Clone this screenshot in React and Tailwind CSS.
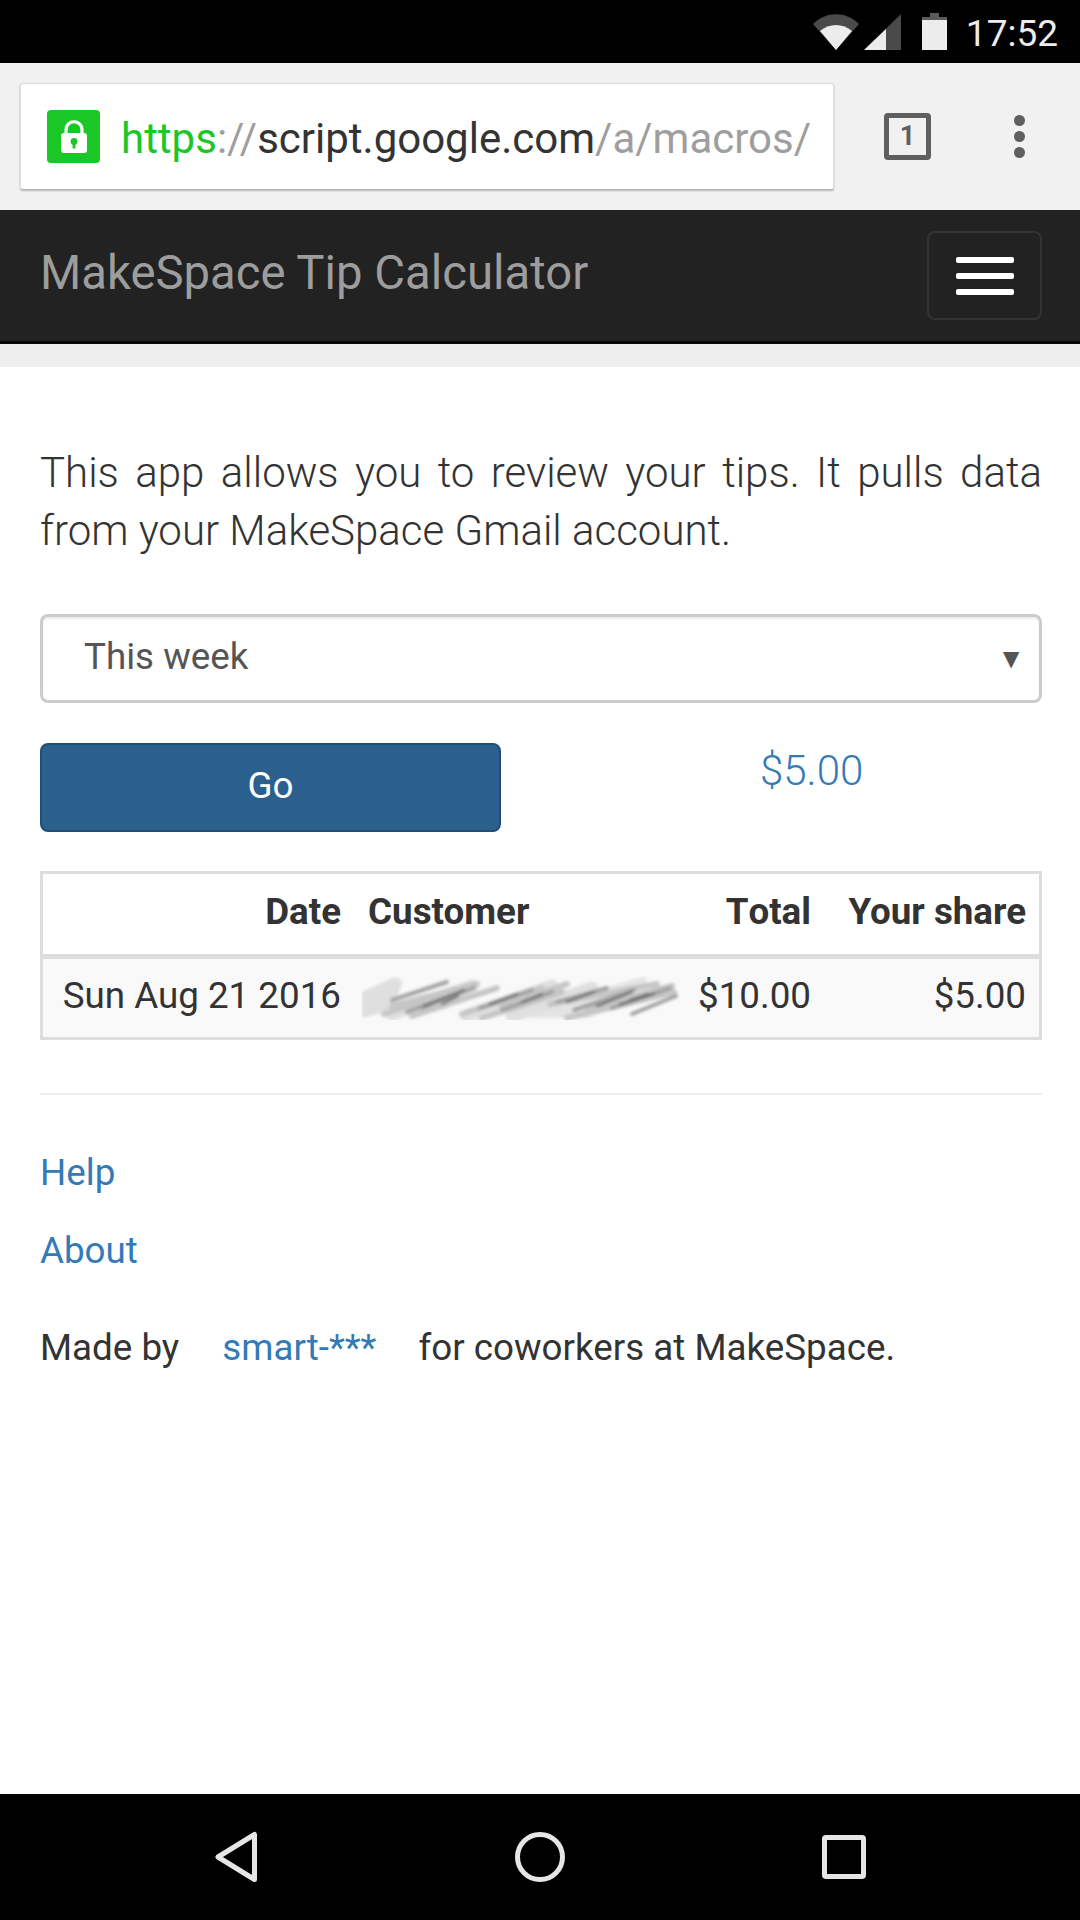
export default function App() {
  return (
    <div className="w-[1080px] h-[1920px] flex flex-col bg-white overflow-hidden font-['Roboto',sans-serif] text-[#333]">
      {/* Status bar */}
      <div className="h-[63px] shrink-0 bg-black flex items-center justify-end pr-[22px]">
        <svg width="46" height="36" viewBox="0 0 46 36" className="mr-[5px]">
          <path d="M23 36 L0 10 C13 -3 33 -3 46 10 Z" fill="#4a4a4a" />
          <path d="M23 36 L7 17 C16 9 30 9 39 17 Z" fill="#ececec" />
        </svg>
        <svg width="37" height="36" viewBox="0 0 37 36" className="mr-[21px]">
          <path d="M37 0 V36 H0 Z" fill="#4a4a4a" />
          <path d="M22 15 V36 H0 Z" fill="#ececec" />
        </svg>
        <svg width="25" height="37" viewBox="0 0 25 37" className="mr-[19px]">
          <path d="M8 0 H17 V4 H25 V37 H0 V4 H8 Z" fill="#ececec" />
          <path d="M8 0 H17 V4 H25 V7 H0 V4 H8 Z" fill="#5a5a5a" />
        </svg>
        <span className="text-[37px] leading-none text-[#ececec] mt-[3px]">17:52</span>
      </div>
      {/* Browser bar */}
      <div className="h-[147px] shrink-0 bg-[#f1f1f1] flex items-center pl-[20px]">
        <div className="w-[814px] h-[107px] bg-white rounded-[3px] border border-[#dcdcdc] border-b-[#b5b5b5] shadow-[0_1px_2px_rgba(0,0,0,0.25)] flex items-center pl-[26px] overflow-hidden">
          <div className="w-[53px] h-[53px] shrink-0 rounded-[4px] bg-[#1bc726] flex items-center justify-center">
            <svg width="28" height="34" viewBox="0 0 28 34">
              <path d="M6 14 V10 C6 -1 22 -1 22 10 V14" fill="none" stroke="#fff" strokeWidth="3.2" />
              <rect x="1" y="13" width="26" height="20" rx="3" fill="#fff" />
              <circle cx="14" cy="21.5" r="3.4" fill="#1bc726" />
              <rect x="12.6" y="22" width="2.8" height="6.5" fill="#1bc726" />
            </svg>
          </div>
          <div className="ml-[21px] w-[690px] whitespace-nowrap text-[42px] leading-[50px] mt-[4px]">
            <span className="text-[#1bc726]">https</span>
            <span className="text-[#9e9e9e]">://</span>
            <span className="text-[#333]">script.google.com</span>
            <span className="text-[#9e9e9e]">/a/macros/</span>
          </div>
        </div>
        <div className="ml-[50px] w-[47px] h-[47px] rounded-[4px] border-[5px] border-[#5f5f5f] flex items-center justify-center text-[27px] font-bold text-[#5f5f5f] leading-none">1</div>
        <div className="ml-[83px] flex flex-col gap-[5px]">
          <span className="w-[11px] h-[11px] rounded-full bg-[#5f5f5f]" />
          <span className="w-[11px] h-[11px] rounded-full bg-[#5f5f5f]" />
          <span className="w-[11px] h-[11px] rounded-full bg-[#5f5f5f]" />
        </div>
      </div>
      {/* Navbar */}
      <div className="h-[134px] shrink-0 bg-[#222] border-b-[3px] border-b-[#080808] flex items-center justify-between pl-[40px] pr-[38px]">
        <span className="text-[47.25px] leading-none text-[#9d9d9d] mt-[-3px]">MakeSpace Tip Calculator</span>
        <div className="w-[115px] h-[89px] rounded-[8px] border-2 border-[#333] flex flex-col items-center justify-center gap-[10px]">
          <span className="w-[58px] h-[6px] rounded-[2px] bg-white" />
          <span className="w-[58px] h-[6px] rounded-[2px] bg-white" />
          <span className="w-[58px] h-[6px] rounded-[2px] bg-white" />
        </div>
      </div>
      <div className="h-[23px] shrink-0 bg-[#eeeeee]" />
      {/* Content */}
      <div className="flex-1 pl-[40px] pr-[38px] pt-[77px]">
        <p className="text-[42px] leading-[58px] font-light text-justify text-[#333]">
          This app allows you to review your tips. It pulls data from your MakeSpace Gmail account.
        </p>
        <div className="mt-[54px] h-[89px] rounded-[8px] border-[3px] border-[#ccc] shadow-[inset_0_2px_2px_rgba(0,0,0,0.075)] flex items-center justify-between pl-[41px] pr-[14px] text-[36.75px] text-[#555]">
          <span className="mt-[-4px]">This week</span>
          <span className="text-[28px] leading-none text-[#555]">▼</span>
        </div>
        <div className="mt-[40px] flex">
          <div className="w-[461px] h-[89px] rounded-[8px] bg-[#2b5f8e] border-2 border-[#204d74] text-white text-[36.75px] flex items-center justify-center pb-[4px]">Go</div>
          <span className="ml-[259px] mt-[3px] text-[42px] leading-[50px] font-light text-[#337ab7]">$5.00</span>
        </div>
        <table className="mt-[39px] w-[1002px] table-fixed border-separate border-spacing-0 border-[3px] border-[#ddd] text-[36.75px]">
          <colgroup>
            <col className="w-[311px]" />
            <col className="w-[331px]" />
            <col className="w-[140px]" />
            <col className="w-[214px]" />
          </colgroup>
          <thead>
            <tr className="h-[85px]">
              <th className="pr-[13px] pb-[4px] text-right font-bold border-b-[5px] border-b-[#ddd]">Date</th>
              <th className="pl-[14px] pb-[4px] text-left font-bold border-b-[5px] border-b-[#ddd]">Customer</th>
              <th className="pr-[14px] pb-[4px] text-right font-bold border-b-[5px] border-b-[#ddd] [font-kerning:none]">Total</th>
              <th className="pr-[13px] pb-[4px] text-right font-bold whitespace-nowrap border-b-[5px] border-b-[#ddd]">Your share</th>
            </tr>
          </thead>
          <tbody>
            <tr className="h-[78px] bg-[#f9f9f9]">
              <td className="pr-[13px] pb-[5px] text-right whitespace-nowrap">Sun Aug 21 2016</td>
              <td className="pl-[8px]">
                <svg width="318" height="44" viewBox="0 0 318 44" className="block">
                  <defs><filter id="b" x="-5%" y="-20%" width="110%" height="140%"><feGaussianBlur stdDeviation="1.8" /></filter></defs>
                  <g filter="url(#b)" fill="none" strokeLinecap="round">
                    <path d="M0 16 L30 2 Q40 0 40 8 L30 34 L0 42 Z" fill="#dfdfdf" stroke="none" />
                    <path d="M165 42 L235 14 L284 0 L284 18 L225 42 Z" fill="#e4e4e4" stroke="none" />
                    <path d="M30 38 L110 10 M105 40 L190 10 M150 40 L230 12" stroke="#e0e0e0" strokeWidth="13" />
                    <path d="M22 38 L112 8 M30 30 L115 8 M50 40 L135 12 M100 38 L180 12 M140 30 L205 8 M205 42 L312 16 M188 28 L295 8 M225 34 L310 10 M120 42 L200 16" stroke="#c6c6c6" strokeWidth="6" />
                    <path d="M30 24 L85 6 M60 32 L112 12 M45 36 L95 18 M118 32 L170 14 M140 34 L190 16 M195 26 L245 12 M212 34 L272 14 M250 32 L308 12 M270 38 L314 20" stroke="#a2a2a2" strokeWidth="4" />
                    <path d="M62 30 L102 14 M80 28 L96 20 M128 28 L155 18 M160 26 L180 18 M205 26 L232 16 M235 30 L270 16 M258 28 L292 18 M268 24 L286 18" stroke="#6f6f6f" strokeWidth="2.5" />
                  </g>
                </svg>
              </td>
              <td className="pr-[14px] pb-[5px] text-right whitespace-nowrap">$10.00</td>
              <td className="pr-[13px] pb-[5px] text-right whitespace-nowrap">$5.00</td>
            </tr>
          </tbody>
        </table>
        <div className="mt-[53px] h-[2px] bg-[#eee]" />
        <div className="mt-[53px] text-[36.75px] leading-[50px] text-[#337ab7]">Help</div>
        <div className="mt-[28px] text-[36.75px] leading-[50px] text-[#337ab7]">About</div>
        <div className="mt-[47px] flex text-[36.75px] leading-[50px] text-[#333]">
          <span className="mr-[43px]">Made by</span>
          <span className="mr-[42px] text-[#337ab7]">smart-***</span>
          <span>for coworkers at MakeSpace.</span>
        </div>
      </div>
      {/* Nav bar */}
      <div className="h-[126px] shrink-0 bg-black flex items-center">
        <svg width="720" height="70" viewBox="0 0 720 70" className="ml-[180px]" fill="none" stroke="#e6e6e6" strokeWidth="5" strokeLinejoin="round">
          <path d="M74.5 12.5 V57.5 L38 35 Z" />
          <circle cx="360" cy="35" r="22.5" />
          <rect x="644.5" y="15.5" width="39" height="39" rx="1.5" />
        </svg>
      </div>
    </div>
  );
}
